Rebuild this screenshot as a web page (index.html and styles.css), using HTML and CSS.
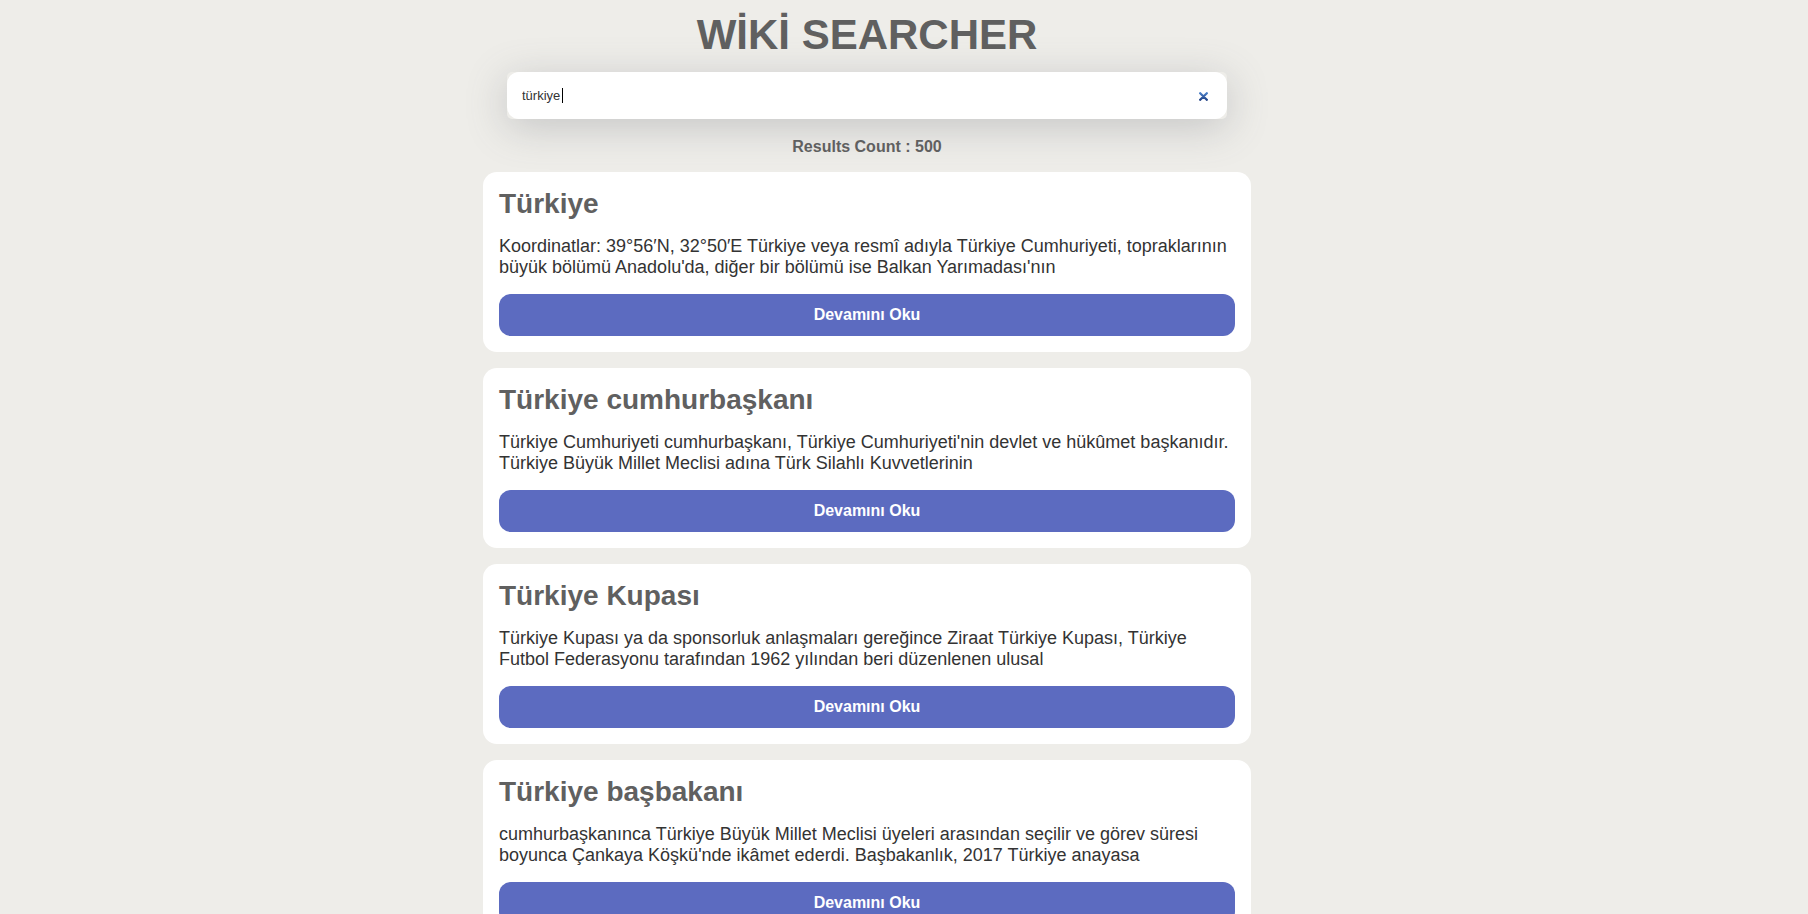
FILE: index.html
```html
<!DOCTYPE html>
<html lang="tr">
<head>
<meta charset="utf-8">
<meta name="viewport" content="width=device-width, initial-scale=1">
<title>WİKİ SEARCHER</title>
<link rel="stylesheet" href="styles.css">
</head>
<body>
<main class="page">
  <h1 class="brand">WİKİ SEARCHER</h1>
  <form class="search" role="search">
    <div class="search-box">
      <input class="search-input" type="text" value="türkiye" aria-label="Ara" autocomplete="off" spellcheck="false">
      <span class="caret" aria-hidden="true"></span>
      <button class="clear" type="reset" aria-label="Temizle">
        <svg class="clear-icon" viewBox="0 0 9 9" width="9" height="9" aria-hidden="true">
          <defs><linearGradient id="ink" gradientUnits="userSpaceOnUse" x1="0" y1="0" x2="0" y2="9"><stop offset="0" stop-color="#4f86cf"/><stop offset="1" stop-color="#1d3c80"/></linearGradient></defs>
          <path d="M1.2 1.2 7.8 7.8M7.8 1.2 1.2 7.8" stroke="url(#ink)" stroke-width="2.3" stroke-linecap="round"/>
        </svg>
      </button>
    </div>
  </form>
  <p class="count">Results Count : 500</p>
  <section class="results">
    <article class="card">
      <h2 class="title">Türkiye</h2>
      <p class="snippet">Koordinatlar: 39°56′N, 32°50′E Türkiye veya resmî adıyla Türkiye Cumhuriyeti, topraklarının büyük bölümü Anadolu'da, diğer bir bölümü ise Balkan Yarımadası'nın</p>
      <a class="more" href="#">Devamını Oku</a>
    </article>
    <article class="card">
      <h2 class="title">Türkiye cumhurbaşkanı</h2>
      <p class="snippet">Türkiye Cumhuriyeti cumhurbaşkanı, Türkiye Cumhuriyeti'nin devlet ve hükûmet başkanıdır. Türkiye Büyük Millet Meclisi adına Türk Silahlı Kuvvetlerinin</p>
      <a class="more" href="#">Devamını Oku</a>
    </article>
    <article class="card">
      <h2 class="title">Türkiye Kupası</h2>
      <p class="snippet">Türkiye Kupası ya da sponsorluk anlaşmaları gereğince Ziraat Türkiye Kupası, Türkiye Futbol Federasyonu tarafından 1962 yılından beri düzenlenen ulusal</p>
      <a class="more" href="#">Devamını Oku</a>
    </article>
    <article class="card">
      <h2 class="title">Türkiye başbakanı</h2>
      <p class="snippet">cumhurbaşkanınca Türkiye Büyük Millet Meclisi üyeleri arasından seçilir ve görev süresi boyunca Çankaya Köşkü'nde ikâmet ederdi. Başbakanlık, 2017 Türkiye anayasa</p>
      <a class="more" href="#">Devamını Oku</a>
    </article>
  </section>
</main>
</body>
</html>
```

FILE: styles.css
```css
* {
  box-sizing: border-box;
  margin: 0;
}

html {
  scrollbar-width: none;
  background: #eeede9;
}

body {
  padding: 11px 74px 16px 0;
  font-family: "Liberation Sans", Arial, sans-serif;
  color: #333;
}

.page {
  display: flex;
  flex-direction: column;
  max-width: 768px;
  margin: 0 auto;
}

.brand {
  font-size: 42px;
  line-height: 48px;
  color: #606060;
  text-align: center;
}

.search {
  padding: 13px 24px 19px;
}

.search-box {
  position: relative;
  display: flex;
  align-items: center;
  border-radius: 5px;
  background: #eeede9;
  box-shadow: 0 8px 40px rgba(100, 104, 112, 0.3);
}

.search-input {
  flex: 1;
  min-width: 0;
  height: 47px;
  padding: 0 48px 0 15px;
  border: 0;
  border-radius: 12px;
  outline: 0;
  background: #fff;
  font-family: inherit;
  font-size: 13px;
  color: #333;
}

.caret {
  position: absolute;
  top: 16px;
  left: 55px;
  width: 1px;
  height: 15px;
  background: #000;
}

.clear {
  position: absolute;
  top: 16px;
  right: 15px;
  display: grid;
  place-items: center;
  width: 17px;
  height: 17px;
  padding: 0;
  border: 0;
  background: none;
}

.clear-icon {
  display: block;
}

.count {
  font-size: 16px;
  line-height: 18px;
  font-weight: bold;
  color: #606060;
  text-align: center;
}

.results {
  display: grid;
  gap: 16px;
  padding-top: 16px;
}

.card {
  display: grid;
  gap: 16px;
  padding: 16px;
  border-radius: 14px;
  background: #fff;
}

.title {
  font-size: 28px;
  line-height: 32px;
  color: #606060;
}

.snippet {
  font-size: 18px;
  line-height: 21px;
}

.snippet + .more {
  margin-top: 0;
}

.more {
  border-radius: 12px;
  background: #5c6bc0;
  font-size: 16px;
  line-height: 42px;
  font-weight: bold;
  color: #fff;
  text-align: center;
  text-decoration: none;
}
```
